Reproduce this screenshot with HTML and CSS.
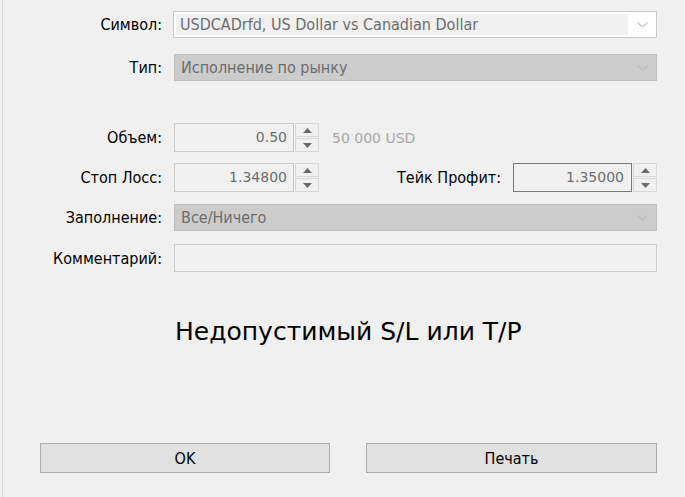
FILE: index.html
```html
<!DOCTYPE html>
<html lang="ru">

<head>
    <meta charset="UTF-8">
    <meta name="viewport" content="width=device-width, initial-scale=1.0">
    <title>Ордер</title>
    <link rel="stylesheet" href="styles.css">
</head>

<body>
    <div class="window">
        <div class="form">
            <div class="row row-symbol">
                <label class="label">Символ:</label>
                <div class="combo combo-white">
                    <span class="combo-text">USDCADrfd, US Dollar vs Canadian Dollar</span>
                    <svg class="chevron" width="11" height="6" viewBox="0 0 11 6"><polyline points="0.5,0.5 5.5,5 10.5,0.5" fill="none" stroke="#a8a8a8" stroke-width="1"/></svg>
                </div>
            </div>
            <div class="row row-type">
                <label class="label">Тип:</label>
                <div class="combo combo-disabled">
                    <span class="combo-text">Исполнение по рынку</span>
                    <svg class="chevron" width="11" height="6" viewBox="0 0 11 6"><polyline points="0.5,0.5 5.5,5 10.5,0.5" fill="none" stroke="#b4b4b4" stroke-width="1"/></svg>
                </div>
            </div>
            <div class="row row-volume">
                <label class="label">Объем:</label>
                <div class="field-line">
                    <div class="num-box">0.50</div>
                    <div class="spin">
                        <div class="spin-btn"><svg width="9" height="5" viewBox="0 0 9 5"><polygon points="0,5 4.5,0 9,5" fill="#6a6a6a"/></svg></div>
                        <div class="spin-btn"><svg width="9" height="5" viewBox="0 0 9 5"><polygon points="0,0 9,0 4.5,5" fill="#6a6a6a"/></svg></div>
                    </div>
                    <span class="hint">50 000 USD</span>
                </div>
            </div>
            <div class="row row-stops">
                <label class="label">Стоп Лосс:</label>
                <div class="field-line split">
                    <div class="group">
                        <div class="num-box">1.34800</div>
                        <div class="spin">
                            <div class="spin-btn"><svg width="9" height="5" viewBox="0 0 9 5"><polygon points="0,5 4.5,0 9,5" fill="#6a6a6a"/></svg></div>
                            <div class="spin-btn"><svg width="9" height="5" viewBox="0 0 9 5"><polygon points="0,0 9,0 4.5,5" fill="#6a6a6a"/></svg></div>
                        </div>
                    </div>
                    <div class="group">
                        <label class="label inline-label">Тейк Профит:</label>
                        <div class="num-box focused">1.35000</div>
                        <div class="spin">
                            <div class="spin-btn"><svg width="9" height="5" viewBox="0 0 9 5"><polygon points="0,5 4.5,0 9,5" fill="#6a6a6a"/></svg></div>
                            <div class="spin-btn"><svg width="9" height="5" viewBox="0 0 9 5"><polygon points="0,0 9,0 4.5,5" fill="#6a6a6a"/></svg></div>
                        </div>
                    </div>
                </div>
            </div>
            <div class="row row-fill">
                <label class="label">Заполнение:</label>
                <div class="combo combo-disabled">
                    <span class="combo-text">Все/Ничего</span>
                    <svg class="chevron" width="11" height="6" viewBox="0 0 11 6"><polyline points="0.5,0.5 5.5,5 10.5,0.5" fill="none" stroke="#b4b4b4" stroke-width="1"/></svg>
                </div>
            </div>
            <div class="row row-comment">
                <label class="label">Комментарий:</label>
                <div class="text-box"></div>
            </div>
        </div>

        <p class="message">Недопустимый S/L или T/P</p>

        <div class="buttons">
            <button class="btn btn-ok">OK</button>
            <button class="btn btn-print">Печать</button>
        </div>
    </div>
</body>

</html>
```

FILE: styles.css
```css
body {
    margin: 0;
    background-color: #f0f0f0;
    font-family: "DejaVu Sans Condensed", "Liberation Sans", Arial, sans-serif;
    font-stretch: condensed;
    overflow: hidden;
}

.window {
    margin-left: 2px;
    height: 497px;
    border-left: 1px solid #d9d9d9;
    display: flex;
    flex-direction: column;
    box-sizing: border-box;
}

.form {
    padding-top: 11px;
    margin-right: 28px;
}

.row {
    display: grid;
    grid-template-columns: 159px 1fr;
    column-gap: 12px;
    align-items: center;
}

.label {
    text-align: right;
    font-size: 16px;
    color: #000;
    white-space: nowrap;
}

.row-type {
    margin-top: 16px;
}

.row-volume {
    margin-top: 42px;
}

.row-stops {
    margin-top: 11px;
}

.row-fill {
    margin-top: 12px;
}

.row-comment {
    margin-top: 13px;
}

/* combo boxes */
.combo {
    height: 27px;
    box-sizing: border-box;
    display: flex;
    align-items: center;
    justify-content: space-between;
    padding: 0 8px 0 2px;
}

.combo-white {
    margin-left: -1px;
    background-color: #fff;
    border: 1px solid #c9c9c9;
}

.combo-white .combo-text {
    background-color: #f0f0f0;
    flex: 1;
    margin-right: 9px;
    height: 21px;
}

.combo-disabled {
    background-color: #cccccc;
    border: 1px solid #bfbfbf;
}

.combo-text {
    font-size: 16px;
    color: #6d6d6d;
    padding-left: 4px;
    line-height: 21px;
    white-space: nowrap;
}

.chevron {
    display: block;
}

/* number fields */
.field-line {
    display: flex;
    align-items: center;
}

.split {
    justify-content: space-between;
}

.group {
    display: flex;
    align-items: center;
}

.num-box {
    width: 120px;
    height: 29px;
    box-sizing: border-box;
    border: 1px solid #cccccc;
    font-family: "DejaVu Sans", Verdana, sans-serif;
    font-stretch: normal;
    font-size: 14px;
    color: #6d6d6d;
    text-align: right;
    line-height: 27px;
    padding-right: 6px;
}

.num-box.focused {
    width: 119px;
    border-color: #7a7a7a;
    padding-right: 7px;
}

.inline-label {
    margin-right: 12px;
}

.spin {
    display: flex;
    flex-direction: column;
    gap: 1px;
    margin-left: 1px;
}

.spin-btn {
    width: 24px;
    height: 14px;
    box-sizing: border-box;
    border: 1px solid #d9d9d9;
    display: flex;
    align-items: center;
    justify-content: center;
}

.spin-btn svg {
    display: block;
}

.hint {
    margin-left: 13px;
    font-family: "DejaVu Sans", Verdana, sans-serif;
    font-stretch: normal;
    font-size: 14px;
    color: #a8a8a8;
}

.text-box {
    height: 28px;
    box-sizing: border-box;
    border: 1px solid #cccccc;
}

/* message */
.message {
    margin: 45px 0 0 172px;
    font-family: "DejaVu Sans", Verdana, sans-serif;
    font-stretch: normal;
    font-size: 25px;
    line-height: 30px;
    color: #000;
}

/* bottom buttons */
.buttons {
    margin-top: auto;
    margin-bottom: 24px;
    padding-left: 37px;
    display: flex;
    gap: 36px;
}

.btn {
    width: 290px;
    height: 30px;
    background-color: #e1e1e1;
    border: 1px solid #adadad;
    font-family: "DejaVu Sans Condensed", "Liberation Sans", Arial, sans-serif;
    font-stretch: condensed;
    font-size: 16px;
    color: #000;
    padding: 0;
}

.btn-print {
    width: 291px;
}
```
